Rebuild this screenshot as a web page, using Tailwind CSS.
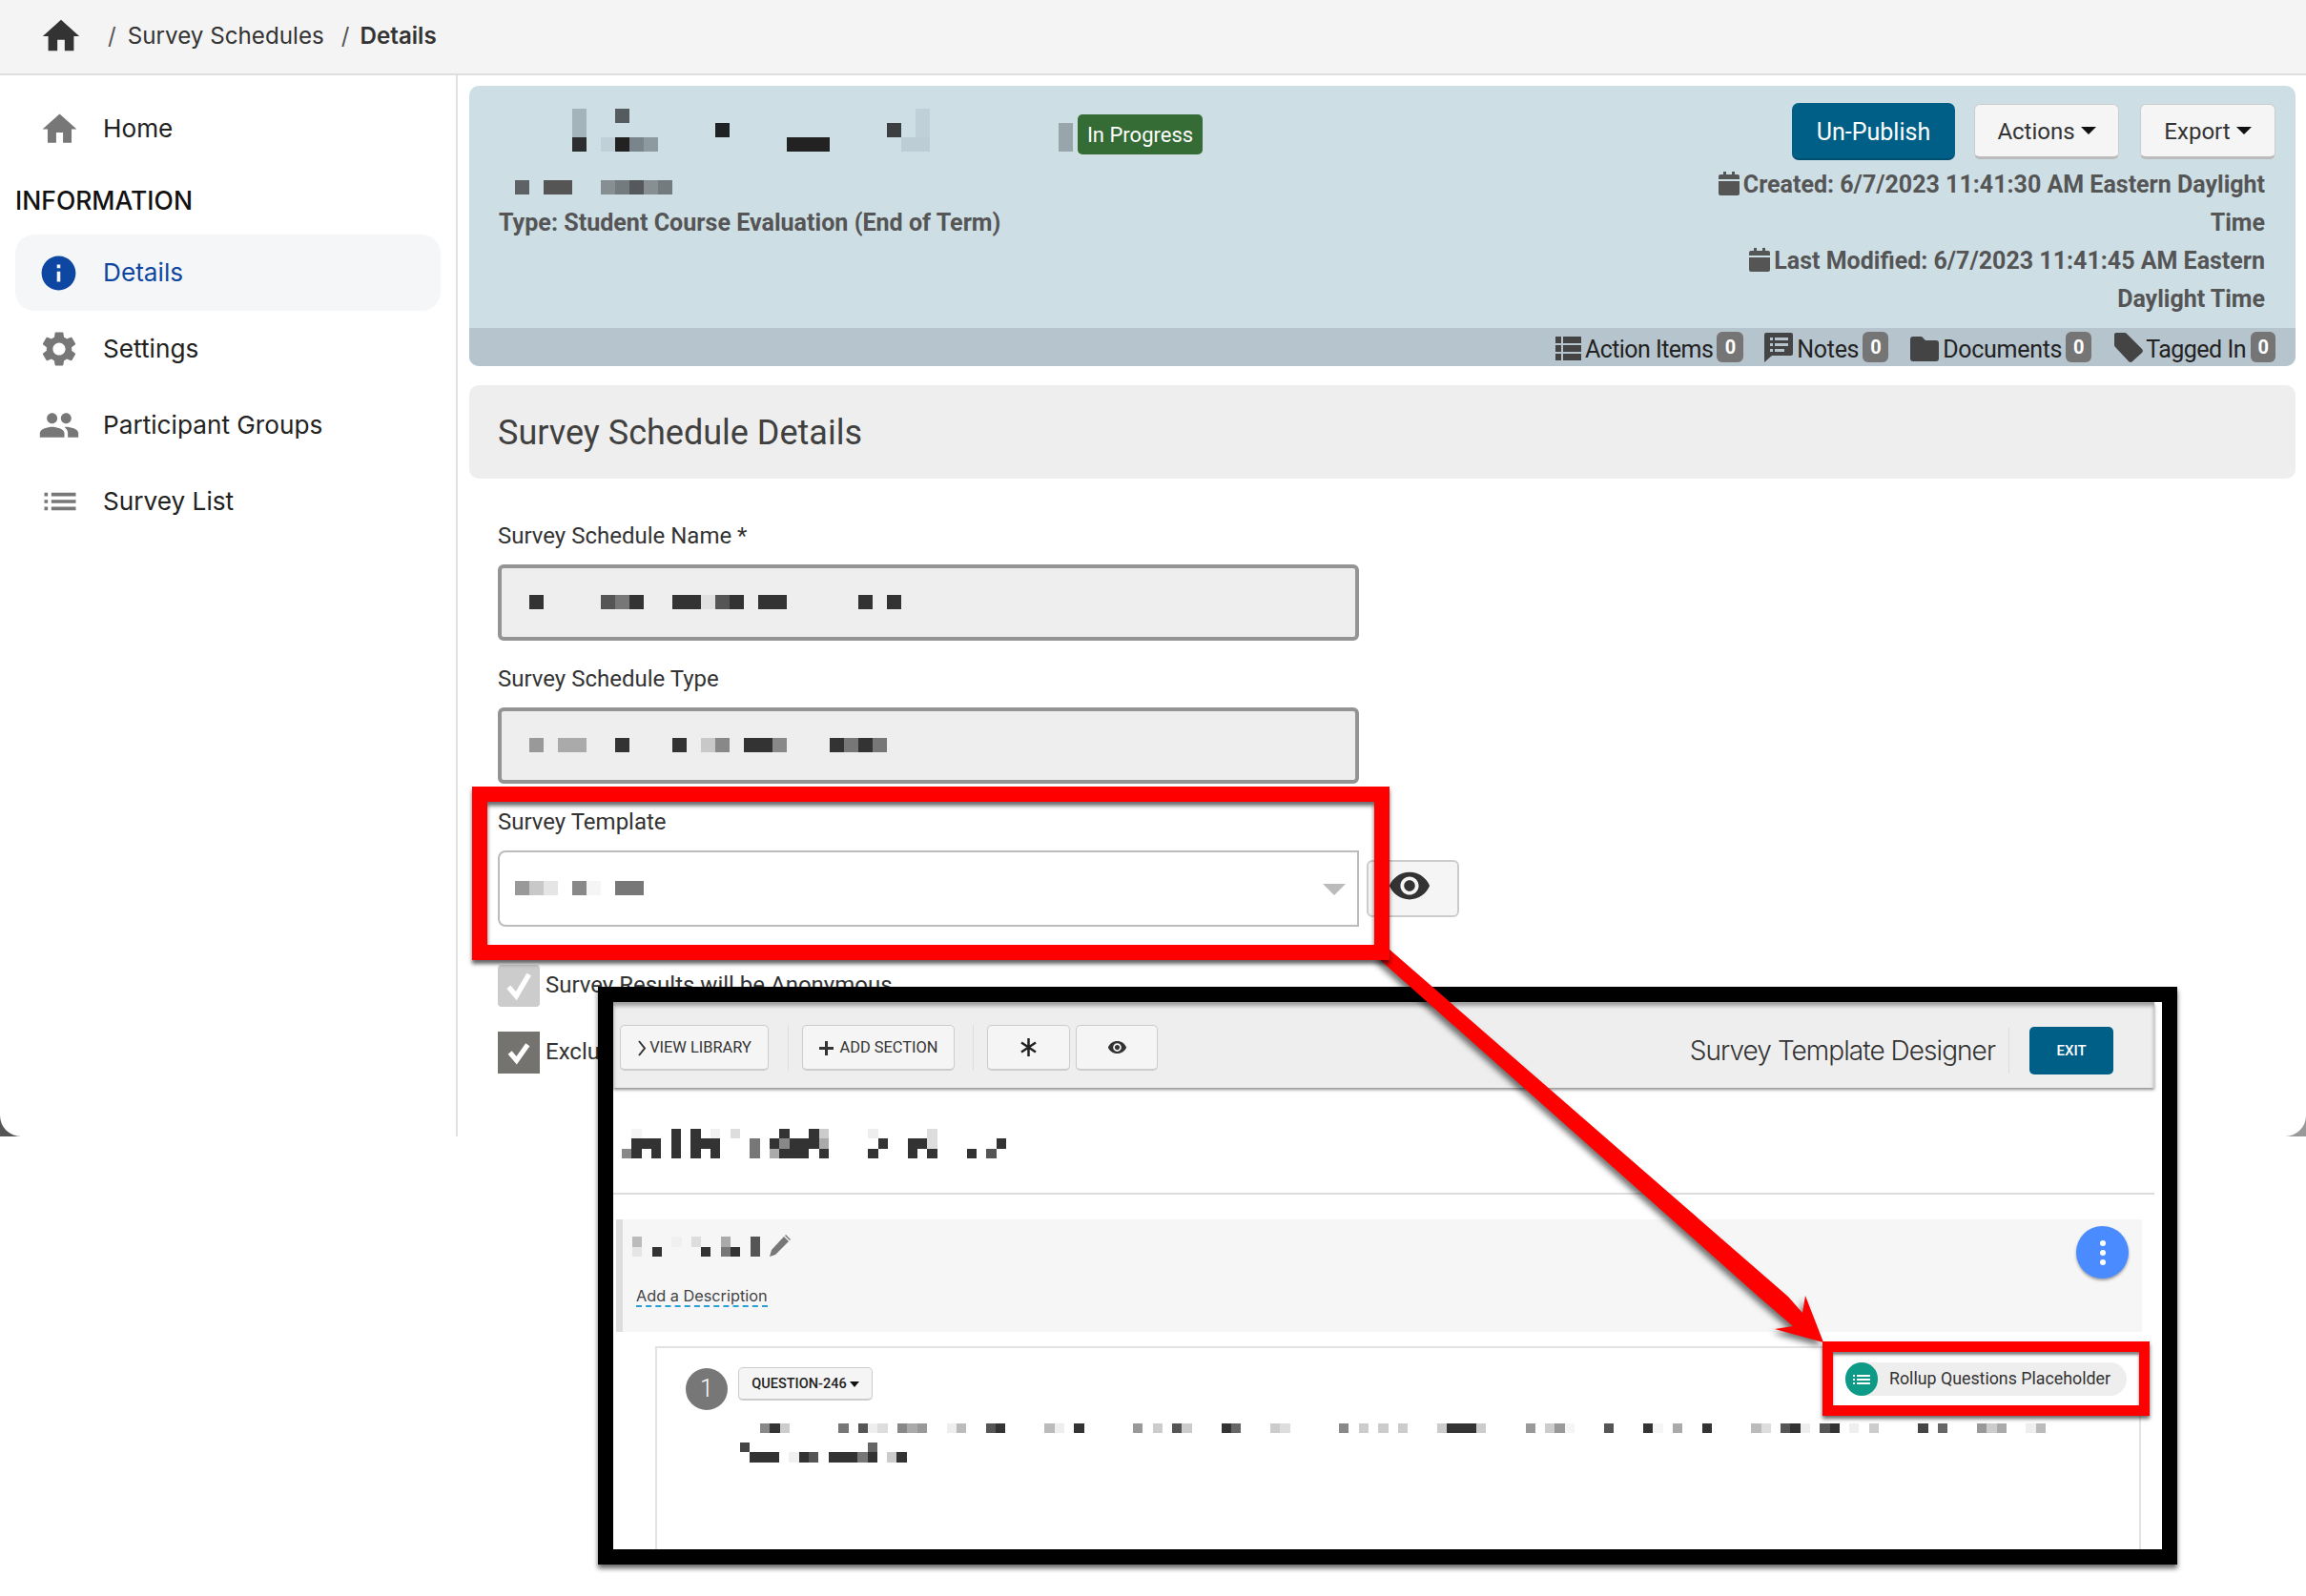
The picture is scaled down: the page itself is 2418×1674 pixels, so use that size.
<!DOCTYPE html>
<html lang="en">
<head>
  <meta charset="UTF-8" />
  <title>Survey Schedule Details</title>
  <script src="https://cdn.jsdelivr.net/npm/@tailwindcss/browser@4"></script>
</head>
<body class="bg-white">
<div class="relative w-[2418px] h-[1674px] overflow-hidden bg-white font-['Roboto',sans-serif] text-[#333]">

  <!-- rounded window corners of the captured page -->
  <div class="absolute left-0 top-[1170px] w-[22px] h-[22px] bg-[#555]"><div class="w-full h-full bg-white rounded-bl-[22px]"></div></div>
  <div class="absolute right-0 top-[1170px] w-[22px] h-[22px] bg-[#999]"><div class="w-full h-full bg-white rounded-br-[22px]"></div></div>

  <div class="relative h-[1192px] flex flex-col bg-transparent">
    <!-- breadcrumb -->
    <header class="h-[79px] shrink-0 bg-[#f4f4f4] border-b-2 border-[#dedede] flex items-center font-['Inter',sans-serif] text-[24.2px] text-[#333]">
      <svg class="ml-[41px] w-[46px] h-[46px] -mt-[2px]" viewBox="0 0 24 24" fill="#333"><path d="M10 20v-6h4v6h5v-8h3L12 3 2 12h3v8z"/></svg>
      <span class="ml-[26px] text-[#555]">/</span>
      <span class="ml-[12px]">Survey Schedules</span>
      <span class="ml-[18px] text-[#555]">/</span>
      <span class="ml-[11px] font-semibold">Details</span>
    </header>

    <div class="flex flex-1 min-h-0">
      <!-- sidebar -->
      <aside class="w-[480px] shrink-0 border-r-2 border-[#e2e2e2] font-['Inter',sans-serif] text-[26.2px] text-[#222] pt-[16px]">
        <a class="flex items-center h-[80px]">
          <svg class="ml-[41px] w-[43px] h-[43px]" viewBox="0 0 24 24" fill="#777"><path d="M10 20v-6h4v6h5v-8h3L12 3 2 12h3v8z"/></svg>
          <span class="ml-[24px]">Home</span>
        </a>
        <h3 class="ml-[16px] h-[36px] mt-[17px] leading-[36px] font-medium text-[#111] text-[26.5px]">INFORMATION</h3>
        <a class="flex items-center h-[80px] mx-[16px] mt-[18px] rounded-[20px] bg-[#f5f6f8] text-[#0d47a1]">
          <svg class="ml-[24px] w-[43px] h-[43px]" viewBox="0 0 24 24" fill="#0d47a1"><path d="M12 2C6.48 2 2 6.48 2 12s4.48 10 10 10 10-4.48 10-10S17.52 2 12 2zm1 15h-2v-6h2v6zm0-8h-2V7h2v2z"/></svg>
          <span class="ml-[25px]">Details</span>
        </a>
        <a class="flex items-center h-[80px]">
          <svg class="ml-[40px] w-[44px] h-[44px]" viewBox="0 0 24 24" fill="#777"><path d="M19.14 12.94c.04-.3.06-.61.06-.94 0-.32-.02-.64-.07-.94l2.03-1.58c.18-.14.23-.41.12-.61l-1.92-3.32c-.12-.22-.37-.29-.59-.22l-2.39.96c-.5-.38-1.03-.7-1.62-.94l-.36-2.54c-.04-.24-.24-.41-.48-.41h-3.84c-.24 0-.43.17-.47.41l-.36 2.54c-.59.24-1.13.57-1.62.94l-2.39-.96c-.22-.08-.47 0-.59.22L2.74 8.87c-.12.21-.08.47.12.61l2.03 1.58c-.05.3-.09.63-.09.94s.02.64.07.94l-2.03 1.58c-.18.14-.23.41-.12.61l1.92 3.32c.12.22.37.29.59.22l2.39-.96c.5.38 1.03.7 1.62.94l.36 2.54c.05.24.24.41.48.41h3.84c.24 0 .44-.17.47-.41l.36-2.54c.59-.24 1.13-.56 1.62-.94l2.39.96c.22.08.47 0 .59-.22l1.92-3.32c.12-.22.07-.47-.12-.61l-2.01-1.58zM12 15.6c-1.98 0-3.6-1.62-3.6-3.6s1.62-3.6 3.6-3.6 3.6 1.62 3.6 3.6-1.62 3.6-3.6 3.6z"/></svg>
          <span class="ml-[24px]">Settings</span>
        </a>
        <a class="flex items-center h-[80px]">
          <svg class="ml-[40px] w-[44px] h-[44px]" viewBox="0 0 24 24" fill="#777"><path d="M16 11c1.66 0 2.99-1.34 2.99-3S17.66 5 16 5c-1.66 0-3 1.34-3 3s1.34 3 3 3zm-8 0c1.66 0 2.99-1.34 2.99-3S9.66 5 8 5C6.34 5 5 6.34 5 8s1.34 3 3 3zm0 2c-2.33 0-7 1.17-7 3.5V19h14v-2.5c0-2.33-4.67-3.5-7-3.5zm8 0c-.29 0-.62.02-.97.05 1.16.84 1.97 1.97 1.97 3.45V19h6v-2.5c0-2.33-4.67-3.5-7-3.5z"/></svg>
          <span class="ml-[24px]">Participant Groups</span>
        </a>
        <a class="flex items-center h-[80px]">
          <svg class="ml-[41px] w-[44px] h-[44px]" viewBox="0 0 24 24" fill="#777"><path d="M3 13h2v-2H3v2zm0 4h2v-2H3v2zm0-8h2V7H3v2zm4 4h14v-2H7v2zm0 4h14v-2H7v2zM7 7v2h14V7H7z"/></svg>
          <span class="ml-[23px]">Survey List</span>
        </a>
      </aside>

      <!-- main -->
      <main class="flex-1 min-w-0 pt-[11px] pl-[12px] pr-[11px]">
        <section class="h-[294px] rounded-[10px] bg-[#cddee5] overflow-hidden flex flex-col">
          <div class="h-[254px] flex justify-between">
            <div class="pl-[32px] pt-[24px]">
              <div class="flex items-start">
                <svg class="ml-[76px]" width="525" height="45" viewBox="0 0 35 3" shape-rendering="crispEdges" data-cells="0 0 1 2 #a5b3ba;0 2 1 1 #2b2d2e;3 0 1 1 #555c60;2 2 1 1 #c0d0d8;3 2 1 1 #222;4 2 1 1 #7a858b;5 2 1 1 #8d9aa0;10 1 1 1 #1f2224;15 2 3 1 #222;22 1 1 1 #3c3f41;23 2 2 1 #bccdd5;24 0 1 2 #bfd0d8;34 1 1 2 #98a6ac"></svg>
                <span class="ml-[5px] mt-[6px] w-[131px] h-[42px] rounded-[5px] bg-[#356b35] text-white text-[22px] flex items-center justify-center">In Progress</span>
              </div>
              <svg class="block ml-[16px] mt-[27px]" width="165" height="15" viewBox="0 0 11 1" shape-rendering="crispEdges" data-cells="0 0 1 1 #5f6265;2 0 2 1 #555;6 0 1 1 #888f93;7 0 1 1 #747b7f;8 0 1 1 #55595c;9 0 1 1 #888f93;10 0 1 1 #747b7f"></svg>
              <p class="mt-[10px] -ml-[1px] h-[40px] leading-[40px] text-[25.1px] font-bold text-[#555]">Type: Student Course Evaluation (End of Term)</p>
            </div>
            <div class="pt-[18px] pr-[21px] flex flex-col items-end">
              <div class="flex items-center h-[60px]">
                <button class="w-[171px] h-[60px] rounded-[7px] bg-[#005f87] border-b-2 border-[#004e70] text-white text-[25px] pt-[4px]">Un-Publish</button>
                <button class="ml-[20px] w-[152px] h-[58px] rounded-[6px] bg-[#f5f5f5] border border-[#ccc] border-b-[3px] border-b-[#bbb] text-[24px] text-[#333] flex items-center justify-center gap-[6px] pt-[2px]">Actions<span class="-mt-[2px] w-0 h-0 border-x-[8px] border-x-transparent border-t-[8px] border-t-[#111]"></span></button>
                <button class="ml-[22px] w-[142px] h-[58px] rounded-[6px] bg-[#f5f5f5] border border-[#ccc] border-b-[3px] border-b-[#bbb] text-[24px] text-[#333] flex items-center justify-center gap-[6px] pt-[2px]">Export<span class="-mt-[2px] w-0 h-0 border-x-[8px] border-x-transparent border-t-[8px] border-t-[#111]"></span></button>
              </div>
              <p class="mt-[6px] pr-[11px] text-right leading-[40px] text-[25px] font-bold text-[#555]">
                <svg class="inline-block w-[22px] h-[25px] mr-[4px] -mt-[6px]" viewBox="0 0 22 25" fill="#555"><path d="M5 0h3v3h6V0h3v3h3a2 2 0 0 1 2 2v3H0V5a2 2 0 0 1 2-2h3zM0 10h22v13a2 2 0 0 1-2 2H2a2 2 0 0 1-2-2z"/></svg>Created: 6/7/2023 11:41:30 AM Eastern Daylight<br>Time<br>
                <svg class="inline-block w-[22px] h-[25px] mr-[4px] -mt-[6px]" viewBox="0 0 22 25" fill="#555"><path d="M5 0h3v3h6V0h3v3h3a2 2 0 0 1 2 2v3H0V5a2 2 0 0 1 2-2h3zM0 10h22v13a2 2 0 0 1-2 2H2a2 2 0 0 1-2-2z"/></svg>Last Modified: 6/7/2023 11:41:45 AM Eastern<br>Daylight Time
              </p>
            </div>
          </div>
          <div class="h-[40px] bg-[#b6c4cd] flex items-center justify-end pr-[21px] text-[25px] text-[#222] tracking-[-0.3px]">
            <svg class="w-[27px] h-[25px] mt-[2px]" viewBox="0 0 27 25" fill="#444"><path d="M0 0h6v7H0zM8 0h19v7H8zM0 9h6v7H0zM8 9h19v7H8zM0 18h6v7H0zM8 18h19v7H8z"/></svg>
            <span class="ml-[4px] mt-[5px] tracking-[-0.55px]">Action Items</span>
            <span class="ml-[4px] w-[28px] h-[32px] rounded-[6px] bg-[#757575] text-white text-[20px] font-bold flex items-center justify-center">0</span>
            <svg class="ml-[22px] w-[30px] h-[31px]" viewBox="0 0 30 31" fill="#444" fill-rule="evenodd"><path d="M2 0h26a2 2 0 0 1 2 2v20a2 2 0 0 1-2 2H8l-8 7V2a2 2 0 0 1 2-2zM6 5v3h3V5zm5 0v3h14V5zm-5 6v3h3v-3zm5 0v3h14v-3zm-5 6v3h3v-3zm5 0v3h10v-3z"/></svg>
            <span class="ml-[4px] mt-[5px]">Notes</span>
            <span class="ml-[4px] w-[27px] h-[32px] rounded-[6px] bg-[#757575] text-white text-[20px] font-bold flex items-center justify-center">0</span>
            <svg class="ml-[23px] w-[30px] h-[26px] mt-[3px]" viewBox="0 0 30 26" fill="#444"><path d="M3 0h9l4 4h11a3 3 0 0 1 3 3v16a3 3 0 0 1-3 3H3a3 3 0 0 1-3-3V3a3 3 0 0 1 3-3z"/></svg>
            <span class="ml-[4px] mt-[5px]">Documents</span>
            <span class="ml-[4px] w-[27px] h-[32px] rounded-[6px] bg-[#757575] text-white text-[20px] font-bold flex items-center justify-center">0</span>
            <svg class="ml-[24px] w-[30px] h-[31px]" viewBox="0 0 30 31" fill="#444"><path d="M2 0h9a3 3 0 0 1 2 1l16 16a3 3 0 0 1 0 4L19 30a3 3 0 0 1-4 0L1 15a3 3 0 0 1-1-2V2a2 2 0 0 1 2-2z"/></svg>
            <span class="ml-[3px] mt-[5px] tracking-[-0.5px]">Tagged In</span>
            <span class="ml-[5px] w-[26px] h-[32px] rounded-[6px] bg-[#757575] text-white text-[20px] font-bold flex items-center justify-center">0</span>
          </div>
        </section>

        <div class="mt-[20px] h-[98px] rounded-[10px] bg-[#eeeeee] pl-[30px] pt-[2px] flex items-center text-[36px] text-[#404040]">Survey Schedule Details</div>

        <form class="pl-[30px]">
          <label class="block mt-[42px] h-[36px] leading-[36px] text-[24px]">Survey Schedule Name *</label>
          <div class="mt-[12px] w-[903px] h-[80px] rounded-[6px] border-[4px] border-[#949494] bg-[#eeeeee] pl-[29px] pb-[2px] flex items-center">
            <svg width="390" height="15" viewBox="0 0 26 1" shape-rendering="crispEdges" data-cells="0 0 1 1 #333;5 0 1 1 #555;6 0 1 1 #777;7 0 1 1 #333;10 0 2 1 #333;12 0 1 1 #e0e0e0;13 0 1 1 #555;14 0 1 1 #333;16 0 2 1 #333;23 0 1 1 #333;25 0 1 1 #333"></svg>
          </div>
          <label class="block mt-[22px] h-[36px] leading-[36px] text-[24px]">Survey Schedule Type</label>
          <div class="mt-[12px] w-[903px] h-[80px] rounded-[6px] border-[4px] border-[#949494] bg-[#eeeeee] pl-[29px] pb-[2px] flex items-center">
            <svg width="375" height="15" viewBox="0 0 25 1" shape-rendering="crispEdges" data-cells="0 0 1 1 #999;2 0 2 1 #aaa;6 0 1 1 #333;10 0 1 1 #333;12 0 1 1 #c8c8c8;13 0 1 1 #888;15 0 2 1 #333;17 0 1 1 #888;21 0 1 1 #333;22 0 1 1 #777;23 0 1 1 #333;24 0 1 1 #777"></svg>
          </div>
          <label class="block mt-[22px] h-[36px] leading-[36px] text-[24px]">Survey Template</label>
          <div class="mt-[12px] flex items-center">
            <div class="w-[903px] h-[80px] rounded-l-[8px] border-2 border-[#bbb] bg-white pl-[16px] pr-[12px] pb-[2px] flex items-center justify-between">
              <svg width="135" height="15" viewBox="0 0 9 1" shape-rendering="crispEdges" data-cells="0 0 1 1 #999;1 0 1 1 #c8c8c8;2 0 1 1 #e5e5e5;4 0 1 1 #888;5 0 1 1 #f5f5f5;7 0 2 1 #777"></svg>
              <span class="mt-[4px] w-0 h-0 border-x-[12px] border-x-transparent border-t-[12px] border-t-[#bbb]"></span>
            </div>
            <button type="button" class="ml-[8px] w-[97px] h-[60px] rounded-[6px] border-2 border-[#ccc] bg-[#f5f5f5] flex items-center justify-center pr-[8px]">
              <svg class="w-[46px] h-[46px] -mt-[6px]" viewBox="0 0 24 24" fill="#333"><path d="M12 4.5C7 4.5 2.73 7.61 1 12c1.73 4.39 6 7.5 11 7.5s9.27-3.11 11-7.5c-1.73-4.39-6-7.5-11-7.5zM12 17c-2.76 0-5-2.24-5-5s2.24-5 5-5 5 2.24 5 5-2.24 5-5 5zm0-8c-1.66 0-3 1.34-3 3s1.34 3 3 3 3-1.34 3-3-1.34-3-3-3z"/></svg>
            </button>
          </div>
          <div class="mt-[40px] flex items-center h-[44px]">
            <span class="w-[44px] h-[44px] rounded-[4px] bg-[#ccc] flex items-center justify-center">
              <svg class="w-[32px] h-[32px]" viewBox="0 0 24 24" fill="none" stroke="#fff" stroke-width="4"><path d="M4 13l6 7L20 3"/></svg>
            </span>
            <span class="ml-[6px] -mt-[2px] text-[24px]">Survey Results will be Anonymous</span>
          </div>
          <div class="mt-[26px] flex items-center h-[44px]">
            <span class="w-[44px] h-[44px] bg-[#74736f] flex items-center justify-center">
              <svg class="w-[28px] h-[28px]" viewBox="0 0 24 24" fill="none" stroke="#fff" stroke-width="4.5"><path d="M4 12l6 7L20 5"/></svg>
            </span>
            <span class="ml-[6px] -mt-[2px] text-[24px]">Exclude from Reports</span>
          </div>
        </form>
      </main>
    </div>
  </div>

  <!-- pasted callout screenshot -->
  <div class="absolute left-[627px] top-[1035px] w-[1656px] h-[606px] border-[16px] border-black bg-white overflow-hidden shadow-[0_4px_5px_rgba(0,0,0,0.6)]">
    <div class="w-[1616px] h-[90px] bg-[#eeeeee] shadow-[0_2px_3px_rgba(0,0,0,0.45),inset_0_4px_4px_rgba(0,0,0,0.35)] flex items-center pt-[6px] pl-[7px] text-[#333] relative">
      <button class="w-[156px] h-[48px] rounded-[5px] border border-[#ccc] border-b-2 bg-[#f5f5f5] text-[16.4px] pt-[2px] flex items-center justify-center gap-[3px]">
        <svg class="w-[10px] h-[17px]" viewBox="0 0 10 17" fill="none" stroke="#333" stroke-width="2"><path d="M2 1l6 7.5L2 16"/></svg>VIEW LIBRARY
      </button>
      <span class="ml-[20px] w-px h-[48px] bg-[#ddd]"></span>
      <button class="ml-[14px] w-[160px] h-[48px] rounded-[5px] border border-[#ccc] border-b-2 bg-[#f5f5f5] text-[16.4px] pt-[2px] flex items-center justify-center gap-[7px]">
        <svg class="w-[15px] h-[15px]" viewBox="0 0 15 15" fill="#333"><path d="M6 0h3v6h6v3H9v6H6V9H0V6h6z"/></svg>ADD SECTION
      </button>
      <span class="ml-[19px] w-px h-[48px] bg-[#ddd]"></span>
      <button class="ml-[14px] w-[87px] h-[48px] rounded-[5px] border border-[#ccc] border-b-2 bg-[#f5f5f5] text-[34px] leading-none flex items-center justify-center">
        <svg class="w-[17px] h-[19px]" viewBox="0 0 17 19" fill="none" stroke="#222" stroke-width="2.5"><path d="M8.5 0v19M1 4.5l15 10M16 4.5L1 14.5"/></svg>
      </button>
      <button class="ml-[6px] w-[86px] h-[48px] rounded-[5px] border border-[#ccc] border-b-2 bg-[#f5f5f5] flex items-center justify-center">
        <svg class="w-[21px] h-[21px]" viewBox="0 0 24 24" fill="#333"><path d="M12 4.5C7 4.5 2.73 7.61 1 12c1.73 4.39 6 7.5 11 7.5s9.27-3.11 11-7.5c-1.73-4.39-6-7.5-11-7.5zM12 17c-2.76 0-5-2.24-5-5s2.24-5 5-5 5 2.24 5 5-2.24 5-5 5zm0-8c-1.66 0-3 1.34-3 3s1.34 3 3 3 3-1.34 3-3-1.34-3-3-3z"/></svg>
      </button>
      <span class="ml-auto text-[28px] font-light font-['Inter',sans-serif] tracking-[-0.95px] mt-[6px]">Survey Template Designer</span>
      <span class="ml-[14px] mt-[6px] w-px h-[48px] bg-[#ddd]"></span>
      <button class="ml-[21px] mr-[43px] mt-[6px] w-[88px] h-[50px] rounded-[5px] bg-[#005f87] text-white text-[15px] font-medium">EXIT</button>
    </div>

    <svg class="block ml-[9px] mt-[43px]" width="403" height="31" viewBox="0 0 39 3" shape-rendering="crispEdges" data-cells="0 2 1 1 #888;1 0 1 1 #f5f5f5;1 1 3 1 #333;1 2 1 1 #333;3 2 1 1 #333;5 0 1 3 #333;7 0 1 3 #333;8 1 2 1 #333;9 2 1 1 #333;9 0 1 1 #f0f0f0;11 0 1 1 #ddd;13 1 1 2 #777;15 1 1 1 #333;15 2 1 1 #aaa;16 0 1 1 #333;16 1 1 1 #888;16 2 3 1 #333;17 1 3 1 #333;19 0 1 1 #333;20 0 1 1 #ccc;20 1 1 1 #aaa;20 2 1 1 #333;25 0 1 1 #eee;25 2 1 1 #333;26 1 1 1 #333;29 1 2 1 #333;29 2 1 1 #333;31 0 1 1 #ddd;31 1 1 1 #ddd;31 2 1 1 #333;35 2 1 1 #333;37 2 1 1 #555;38 1 1 1 #333"></svg>
    <div class="mt-[36px] w-[1616px] h-[2px] bg-[#dddddd]"></div>

    <section class="mt-[26px] ml-[3px] w-[1600px] h-[118px] border-l-[7px] border-[#dddddd] bg-[#f6f6f6] flex justify-between">
      <div class="pl-[14px] pt-[18px]">
        <div class="flex items-start">
          <svg class="block -ml-[4px]" width="134" height="21" viewBox="0 0 13 2" shape-rendering="crispEdges" data-cells="0 0 1 1 #bbb;0 1 1 1 #e5e5e5;2 1 1 1 #333;4 0 1 1 #f0f0f0;6 0 1 1 #ddd;7 1 1 1 #333;9 0 1 1 #aaa;9 1 1 1 #777;10 1 1 1 #333;12 0 1 2 #555"></svg>
          <svg class="ml-[9px] -mt-[2px] w-[23px] h-[23px]" viewBox="0 0 23 23" fill="#777"><path d="M16 2l5 5L7 21l-6 2 2-7zM18 0l5 5-1 1-5-5z"/></svg>
        </div>
        <a class="inline-block mt-[31px] text-[16.3px] leading-[20px] text-[#444] font-['Inter',sans-serif] border-b-2 border-dashed border-[#2a9fd6]">Add a Description</a>
      </div>
      <button class="mt-[7px] mr-[14px] w-[55px] h-[55px] rounded-full bg-[#4a8cff] shadow-[0_2px_3px_rgba(0,0,0,0.35)] flex flex-col items-center justify-center gap-[4px]">
        <span class="w-[6px] h-[6px] rounded-full bg-white"></span>
        <span class="w-[6px] h-[6px] rounded-full bg-white"></span>
        <span class="w-[6px] h-[6px] rounded-full bg-white"></span>
      </button>
    </section>

    <section class="mt-[15px] ml-[44px] w-[1558px] h-[220px] border-2 border-[#e3e3e3] pl-[30px] pt-[21px]">
      <div class="flex items-start">
        <span class="w-[44px] h-[44px] rounded-full bg-[#777] text-white text-[25px] font-light flex items-center justify-center">1</span>
        <button class="ml-[11px] -mt-[1px] w-[141px] h-[35px] rounded-[5px] border border-[#ccc] border-b-2 bg-[#f5f5f5] text-[14.5px] pt-[2px] font-medium text-[#222] flex items-center justify-center gap-[3px]">QUESTION-246<span class="w-0 h-0 border-x-[5px] border-x-transparent border-t-[6px] border-t-[#111]"></span></button>
      </div>
      <svg class="block ml-[78px] mt-[14px]" width="1348" height="10.3" viewBox="0 0 131 1" shape-rendering="crispEdges" data-cells="0 0 1 1 #888;1 0 1 1 #333;2 0 1 1 #ccc;8 0 1 1 #777;10 0 1 1 #555;11 0 1 1 #eee;12 0 1 1 #ddd;14 0 1 1 #888;15 0 1 1 #aaa;16 0 1 1 #999;19 0 1 1 #eee;20 0 1 1 #bbb;23 0 1 1 #555;24 0 1 1 #333;29 0 1 1 #bbb;30 0 1 1 #eee;32 0 1 1 #333;38 0 1 1 #999;40 0 1 1 #ccc;42 0 1 1 #555;43 0 1 1 #ccc;47 0 1 1 #333;48 0 1 1 #666;52 0 1 1 #ccc;53 0 1 1 #ddd;59 0 1 1 #888;61 0 1 1 #ccc;63 0 1 1 #ccc;65 0 1 1 #ccc;69 0 1 1 #ccc;70 0 3 1 #333;73 0 1 1 #ccc;78 0 1 1 #999;80 0 1 1 #ccc;81 0 1 1 #999;82 0 1 1 #f5f5f5;86 0 1 1 #555;90 0 1 1 #333;91 0 1 1 #f5f5f5;93 0 1 1 #aaa;96 0 1 1 #333;101 0 1 1 #bbb;102 0 1 1 #ddd;104 0 1 1 #555;105 0 1 1 #333;106 0 1 1 #eee;108 0 1 1 #555;109 0 1 1 #333;111 0 1 1 #eee;113 0 1 1 #ccc;118 0 1 1 #444;120 0 1 1 #666;124 0 1 1 #999;125 0 1 1 #ccc;126 0 1 1 #aaa;129 0 1 1 #eee;130 0 1 1 #bbb"></svg>
      <svg class="block ml-[57px] mt-[10px]" width="185" height="20.6" viewBox="0 0 18 2" shape-rendering="crispEdges" data-cells="0 0 1 1 #444;13 0 1 1 #666;1 1 3 1 #333;5 1 1 1 #f0f0f0;6 1 1 1 #333;7 1 1 1 #555;9 1 3 1 #333;12 1 1 1 #777;13 1 1 1 #333;15 1 1 1 #ccc;16 1 1 1 #333"></svg>
    </section>
  </div>

  <!-- red arrow -->
  <svg class="absolute left-0 top-0 drop-shadow-[-3px_4px_3px_rgba(0,0,0,0.55)]" width="2418" height="1674" viewBox="0 0 2418 1674">
    <polygon fill="#fe0000" points="1445,1005 1456,995 1875,1360 1890,1377 1893,1359 1912,1408 1861,1394 1880,1391 1844,1360" />
  </svg>

  <!-- red frame round the template field -->
  <div class="absolute left-[495px] top-[825px] w-[962px] h-[182px] border-[16px] border-[#fe0000] shadow-[0_4px_4px_rgba(0,0,0,0.6),inset_0_4px_4px_rgba(0,0,0,0.6)]"></div>

  <!-- red frame round the rollup pill -->
  <div class="absolute left-[1911px] top-[1407px] w-[343px] h-[78px] border-[11px] border-[#fe0000] bg-white shadow-[0_3px_4px_rgba(0,0,0,0.6),inset_0_3px_3px_rgba(0,0,0,0.5)] pl-[13px] pt-[11px]">
    <div class="w-[295px] h-[35px] rounded-full bg-[#eeeeee] flex items-center">
      <span class="w-[34px] h-[35px] rounded-full bg-[#0d9b87] flex items-center justify-center">
        <svg class="w-[24px] h-[24px]" viewBox="0 0 24 24" fill="#ffffff"><path d="M3 13h2v-2H3v2zm0 4h2v-2H3v2zm0-8h2V7H3v2zm4 4h14v-2H7v2zm0 4h14v-2H7v2zM7 7v2h14V7H7z"/></svg>
      </span>
      <span class="ml-[12px] text-[17.8px] text-[#333]">Rollup Questions Placeholder</span>
    </div>
  </div>
</div>

<script>
  // the blurred-out bits of the capture: "col row w h colour" cells in each svg
  document.querySelectorAll('svg[data-cells]').forEach((svg) => {
    svg.innerHTML = svg.dataset.cells.split(';').map((cell) => {
      const [x, y, w, h, fill] = cell.split(' ');
      return `<rect x="${x}" y="${y}" width="${w}" height="${h}" fill="${fill}"/>`;
    }).join('');
  });
</script>
</body>
</html>
